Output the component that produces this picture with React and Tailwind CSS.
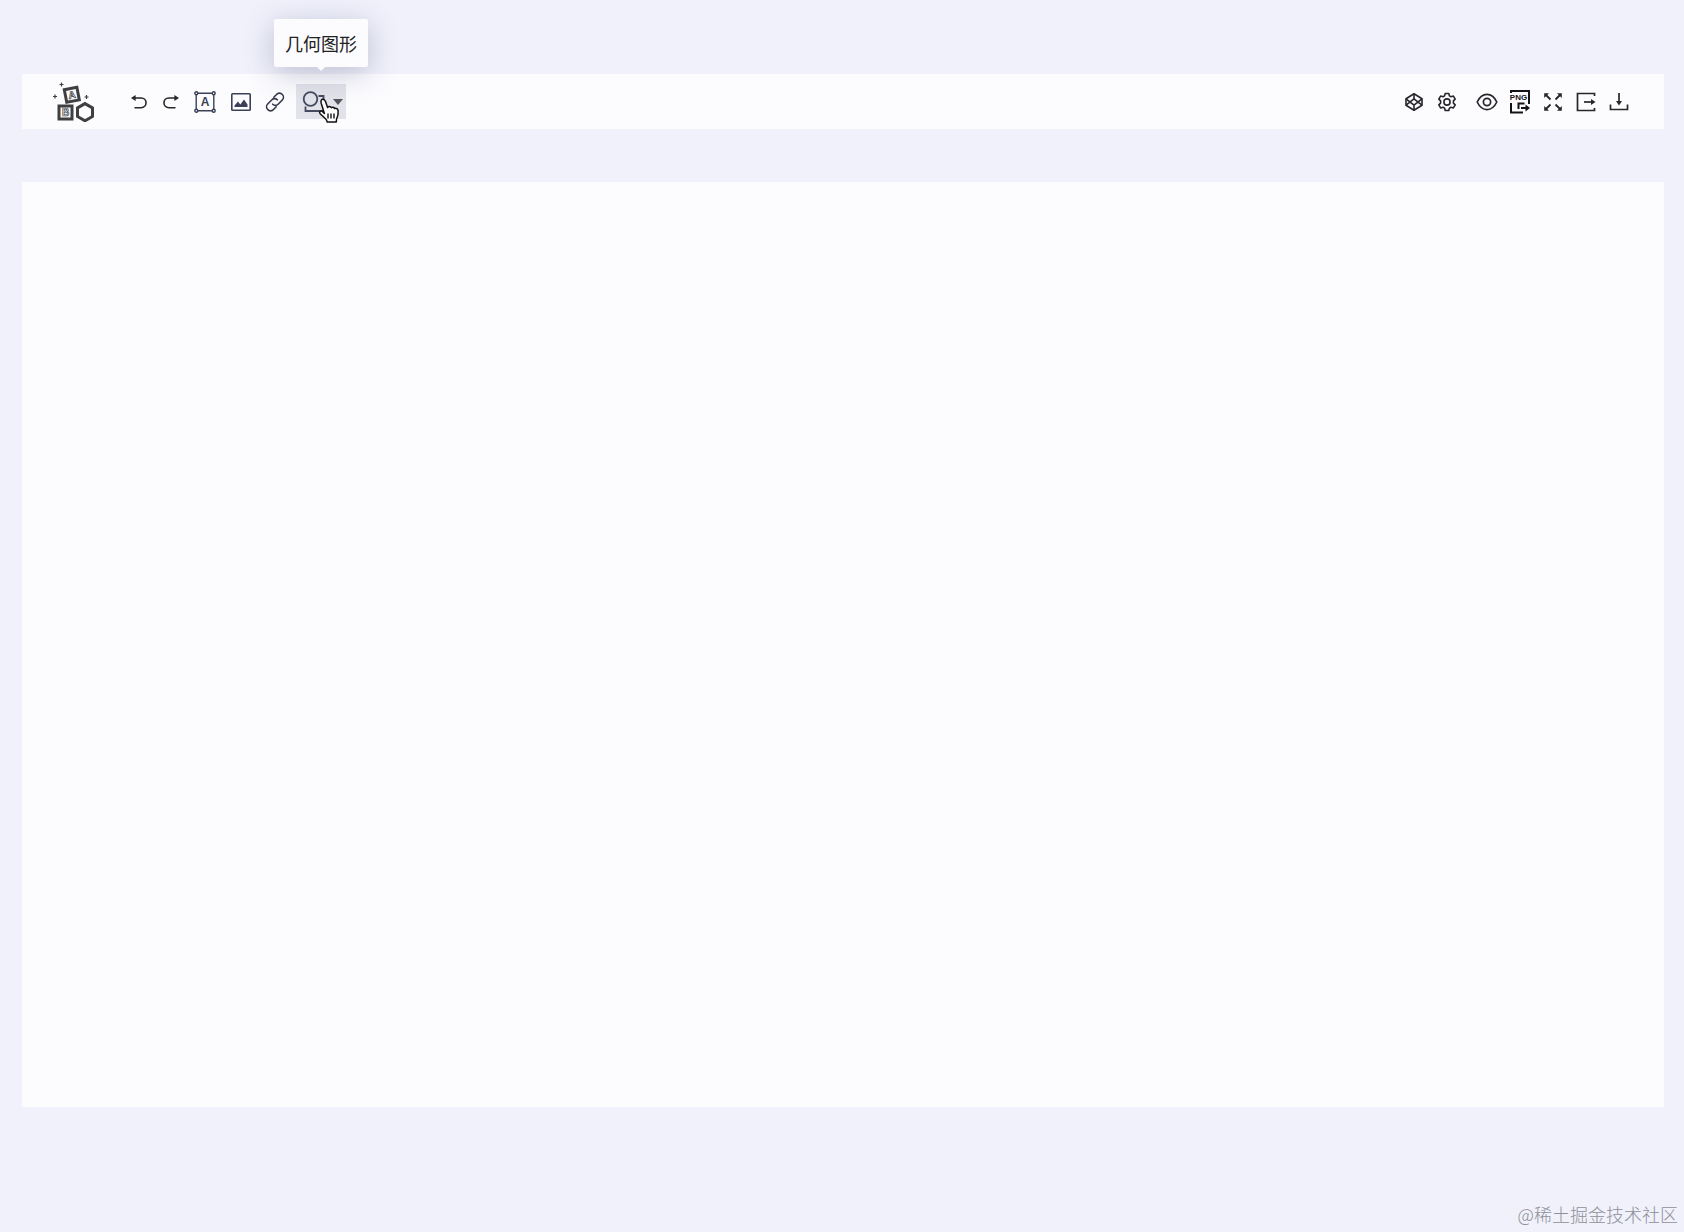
import React from "react";

const FONT = "font-['Noto_Sans_CJK_SC',sans-serif]";

function Logo() {
  return (
    <svg width="44" height="40" viewBox="0 0 44 40" fill="none" aria-hidden>
      <g stroke="#3f3f42" strokeWidth="3">
        <rect x="6" y="24" width="13" height="13" />
        <rect x="-6.4" y="-6.4" width="12.8" height="12.8" transform="translate(18.8 12.8) rotate(-11)" />
        <path d="M32 21.6l7.5 4.3v8.6L32 38.8l-7.5-4.3v-8.6z" />
      </g>
      <g stroke="#3f3f42" strokeWidth="1.2">
        <path d="M8.5 0.500v4M6.500 2.500h4M2 12.500v4M0 14.500h4M33.500 13v4M31.500 15h4" />
      </g>
      <g stroke="#3f3f42" strokeWidth="0.7" fontFamily="Liberation Sans, sans-serif" fontWeight="700" fontSize="10" textAnchor="middle">
        <text x="12.5" y="34">B</text>
        <text x="18.8" y="16.4" transform="rotate(-11 18.8 12.8)">A</text>
      </g>
    </svg>
  );
}

function UndoIcon() {
  return (
    <svg width="18" height="16" viewBox="0 0 18 16" fill="none" stroke="#26262b" strokeWidth="1.6" aria-hidden>
      <path d="M4 4h7.2a4.8 4.8 0 0 1 0 9.7H4.5" />
      <path d="M1 4l4.6-3v6z" fill="#26262b" stroke="none" />
    </svg>
  );
}

function RedoIcon() {
  return (
    <svg width="18" height="16" viewBox="0 0 18 16" fill="none" stroke="#26262b" strokeWidth="1.6" aria-hidden>
      <path d="M14 4H6.8a4.8 4.8 0 0 0 0 9.7h6.7" />
      <path d="M17 4l-4.6-3v6z" fill="#26262b" stroke="none" />
    </svg>
  );
}

function TextIcon() {
  return (
    <svg width="22" height="22" viewBox="0 0 22 22" fill="none" stroke="#3b4058" strokeWidth="1.4" aria-hidden>
      <path d="M4 2.2h14M4 19.8h14M2.2 4v14M19.8 4v14" />
      <circle cx="2.3" cy="2.3" r="1.5" />
      <circle cx="19.7" cy="2.3" r="1.5" />
      <circle cx="2.3" cy="19.7" r="1.5" />
      <circle cx="19.7" cy="19.7" r="1.5" />
      <text x="11" y="15.4" fill="#3b4058" stroke="none" fontFamily="Liberation Sans, sans-serif" fontWeight="700" fontSize="12" textAnchor="middle">
        A
      </text>
    </svg>
  );
}

function ImageIcon() {
  return (
    <svg width="22" height="20" viewBox="0 0 22 20" fill="none" aria-hidden>
      <rect x="1.8" y="1.8" width="18.4" height="16.4" rx="0.8" stroke="#3b4058" strokeWidth="1.6" />
      <path d="M4.5 15v-1.500L8 9.500l2.300 3L14 7.500l3.500 5V15z" fill="#3b4058" />
    </svg>
  );
}

function LinkIcon() {
  return (
    <svg width="20" height="20" viewBox="0 0 20 20" fill="none" stroke="#35384a" strokeWidth="1.6" strokeLinecap="round" aria-hidden>
      <path d="M8.8 5.2l2.7-2.7a3.7 3.7 0 0 1 5.800 0 3.900 3.900 0 0 1 0 5.500l-4.200 4.200a3.700 3.700 0 0 1-5.400 0" />
      <path d="M11.2 14.8l-2.7 2.7a3.7 3.7 0 0 1-5.800 0 3.900 3.900 0 0 1 0-5.500l4.200-4.200a3.700 3.700 0 0 1 5.400 0" />
    </svg>
  );
}

function ShapeIcon() {
  return (
    <svg width="25" height="22" viewBox="0 0 25 22" fill="none" stroke="#454a61" strokeWidth="1.8" aria-hidden>
      <circle cx="10.5" cy="8" r="6.8" />
      <path d="M18.5 5h5v15H5.5v-4.500" />
    </svg>
  );
}

function HandCursor() {
  return (
    <svg width="22" height="26" viewBox="0 0 22 26" aria-hidden>
      <path
        d="M6.4 15.5L3.2 5.2C2.6 3 3.2 1.6 4.5 1.3c1.4-.3 2.3.5 2.900 2l2.200 6.200c.9-1.300 3-1.200 3.600.2 1-1 2.800-.6 3.300.8 1.700-.8 3.300.2 3.600 2.200.5 3.800-.2 5.600-1.600 8.600L18.300 24H9.200l-.8-2.300c-2-1.800-4.300-4.200-6.200-6-1.400-1.500.1-3.300 1.900-2.400z"
        fill="#fff"
        stroke="#111"
        strokeWidth="1.5"
        strokeLinejoin="round"
      />
      <path d="M10 15.5v5M13 15.5v5M16 15.5v5" stroke="#111" strokeWidth="1.4" />
    </svg>
  );
}

function CodepenIcon() {
  return (
    <svg width="20" height="20" viewBox="0 0 20 20" fill="none" stroke="#26262b" strokeWidth="1.6" strokeLinejoin="round" aria-hidden>
      <path d="M10 1.8l8 5v6.4l-8 5-8-5V6.8z" />
      <path d="M10 1.8v5M10 13.2v5M2 6.8l8 6.4 8-6.4M2 13.2l8-6.4 8 6.4" />
    </svg>
  );
}

function GearIcon() {
  return (
    <svg width="20" height="20" viewBox="0 0 20 20" fill="none" stroke="#26262b" strokeWidth="1.6" strokeLinejoin="round" aria-hidden>
      <path d="M8.2 1.5h3.6l.6 2.4 1.6.9 2.4-.7 1.8 3.1-1.8 1.7v2.2l1.8 1.7-1.8 3.1-2.4-.7-1.6.9-.6 2.4H8.2l-.6-2.4-1.6-.9-2.4.7-1.8-3.1 1.8-1.7V8.9L1.8 7.2l1.8-3.1 2.4.7 1.6-.9z" />
      <circle cx="10" cy="10" r="3.1" />
    </svg>
  );
}

function EyeIcon() {
  return (
    <svg width="22" height="20" viewBox="0 0 22 20" fill="none" stroke="#26262b" strokeWidth="1.7" aria-hidden>
      <path d="M1.2 10C3.5 5.2 7 2.4 11 2.4s7.5 2.8 9.8 7.6c-2.3 4.8-5.8 7.6-9.8 7.6S3.5 14.8 1.2 10z" />
      <circle cx="11" cy="10" r="3.6" />
    </svg>
  );
}

function PngIcon() {
  return (
    <svg width="22" height="26" viewBox="0 0 22 26" fill="none" stroke="#141416" strokeWidth="2" aria-hidden>
      <path d="M2 4V2h18v13" />
      <path d="M2 14v9.500h12" />
      <path d="M9.5 20v-5.500h6" />
      <path d="M12 19h5" />
      <path d="M16.5 15.500l4.500 3.500-4.500 3.500z" fill="#141416" stroke="none" />
      <text x="9.500" y="11" fill="#141416" stroke="none" fontFamily="Liberation Sans, sans-serif" fontWeight="700" fontSize="8" textAnchor="middle">
        PNG
      </text>
    </svg>
  );
}

function ExpandIcon() {
  return (
    <svg width="20" height="20" viewBox="0 0 20 20" stroke="#26262b" strokeWidth="1.8" aria-hidden>
      <path d="M3 3l4.5 4.5M17 3l-4.5 4.5M3 17l4.5-4.5M17 17l-4.5-4.5" />
      <path
        d="M1.2 1.2h4.8l-4.8 4.8zM18.8 1.2h-4.800l4.800 4.800zM1.200 18.800h4.800l-4.800-4.800zM18.800 18.800h-4.800l4.800-4.800z"
        fill="#26262b"
        stroke="none"
      />
    </svg>
  );
}

function ExportIcon() {
  return (
    <svg width="20" height="20" viewBox="0 0 20 20" fill="none" stroke="#26262b" strokeWidth="1.7" aria-hidden>
      <path d="M18.5 4V1.500h-17v17h17V16" />
      <path d="M8 10h8" />
      <path d="M15 7l4.500 3-4.500 3z" fill="#26262b" stroke="none" />
    </svg>
  );
}

function DownloadIcon() {
  return (
    <svg width="20" height="20" viewBox="0 0 20 20" fill="none" stroke="#26262b" strokeWidth="1.7" aria-hidden>
      <path d="M1.500 12.500v5h17v-5" />
      <path d="M10 1v9" />
      <path d="M7 9h6l-3 4.500z" fill="#26262b" stroke="none" />
    </svg>
  );
}

function ToolButton({ label, className, children }) {
  return (
    <button type="button" aria-label={label} className={`flex h-[35px] shrink-0 items-center justify-center ${className}`}>
      {children}
    </button>
  );
}

function Tooltip({ children }) {
  return (
    <div
      role="tooltip"
      className="absolute bottom-full left-1/2 mb-[17px] -translate-x-1/2 rounded-xs bg-[#fcfcff] px-[11px] py-[10px] text-lg leading-7 whitespace-nowrap text-[#222] shadow-[0_6px_30px_rgba(80,85,120,0.32)]"
    >
      {children}
      <span className="absolute top-full left-1/2 -translate-x-1/2 border-x-4 border-t-4 border-x-transparent border-t-[#fcfcff]" />
    </div>
  );
}

function Toolbar() {
  return (
    <header className="flex h-[55px] items-center justify-between bg-[#fcfcff] pr-[29px] pl-[31px]">
      <div className="flex items-center">
        <a href="#home" aria-label="Home" className="mr-[26px]">
          <Logo />
        </a>
        <ToolButton label="撤销" className="w-8"><UndoIcon /></ToolButton>
        <ToolButton label="重做" className="w-8"><RedoIcon /></ToolButton>
        <ToolButton label="文本" className="w-9"><TextIcon /></ToolButton>
        <ToolButton label="图片" className="w-9"><ImageIcon /></ToolButton>
        <ToolButton label="链接" className="w-8"><LinkIcon /></ToolButton>
        <div className="relative ml-[5px]">
          <ToolButton label="几何图形" className="w-[50px] gap-2 bg-[#e2e3ea]">
            <ShapeIcon />
            <span className="border-x-5 border-t-6 border-x-transparent border-t-[#55555c]" />
          </ToolButton>
          <Tooltip>几何图形</Tooltip>
          <div className="pointer-events-none absolute top-[14px] left-[22px]">
            <HandCursor />
          </div>
        </div>
      </div>

      <div className="flex items-center gap-[7px]">
        <div className="flex">
          <ToolButton label="组件" className="w-[33px]"><CodepenIcon /></ToolButton>
          <ToolButton label="设置" className="w-[33px]"><GearIcon /></ToolButton>
        </div>
        <div className="flex">
          <ToolButton label="预览" className="w-[33px]"><EyeIcon /></ToolButton>
          <ToolButton label="导出图片" className="w-[33px]"><PngIcon /></ToolButton>
          <ToolButton label="全屏" className="w-[33px]"><ExpandIcon /></ToolButton>
          <ToolButton label="导出" className="w-[33px]"><ExportIcon /></ToolButton>
          <ToolButton label="下载" className="w-[33px]"><DownloadIcon /></ToolButton>
        </div>
      </div>
    </header>
  );
}

export default function App() {
  return (
    <div className={`flex min-h-screen flex-col bg-[#f0f1fb] pt-[74px] ${FONT}`}>
      <div className="flex grow flex-col gap-[53px] pr-5 pl-[22px]">
        <Toolbar />
        <main className="grow bg-[#fcfcff]" />
      </div>
      <footer className="flex h-[125px] items-end justify-end px-1.5 text-lg leading-9 font-light text-[#8f8f98]">
        @稀土掘金技术社区
      </footer>
    </div>
  );
}
